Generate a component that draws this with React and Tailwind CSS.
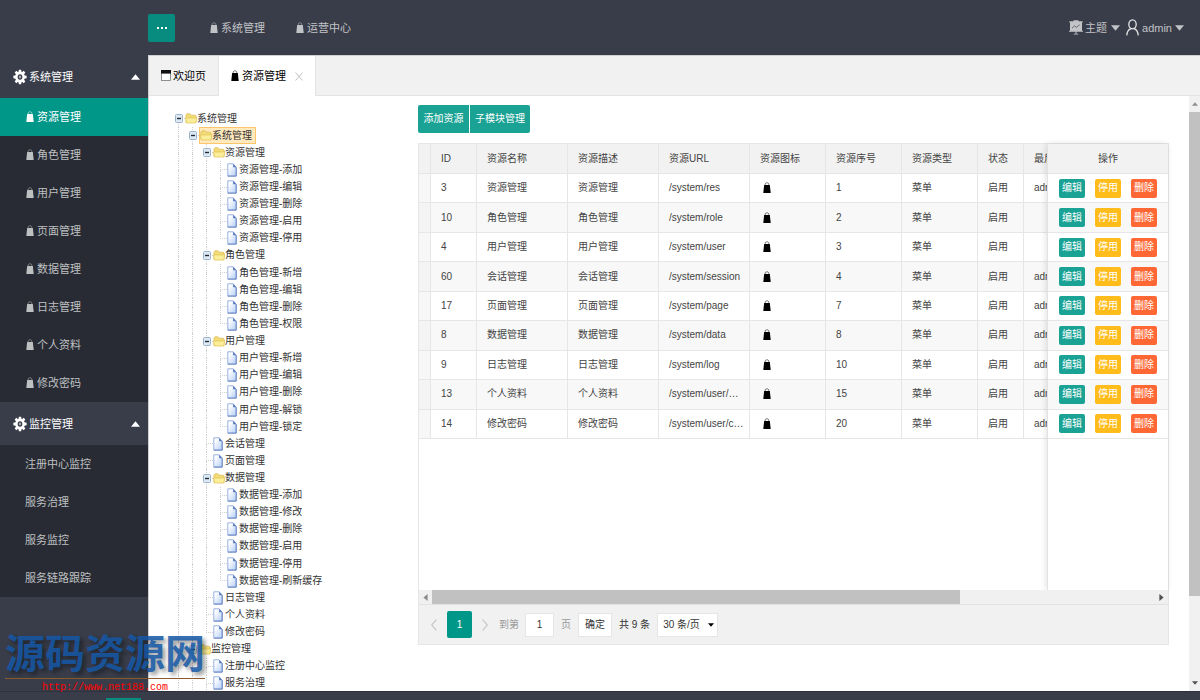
import React from "react";

const BAG_MENU = ["资源管理", "角色管理", "用户管理", "页面管理", "数据管理", "日志管理", "个人资料", "修改密码"];
const MONITOR_MENU = ["注册中心监控", "服务治理", "服务监控", "服务链路跟踪"];

const TREE = {
  name: "系统管理",
  children: [
    {
      name: "系统管理",
      selected: true,
      children: [
        { name: "资源管理", children: ["添加", "编辑", "删除", "启用", "停用"].map((s) => ({ name: "资源管理-" + s })) },
        { name: "角色管理", children: ["新增", "编辑", "删除", "权限"].map((s) => ({ name: "角色管理-" + s })) },
        { name: "用户管理", children: ["新增", "编辑", "删除", "解锁", "锁定"].map((s) => ({ name: "用户管理-" + s })) },
        { name: "会话管理" },
        { name: "页面管理" },
        { name: "数据管理", children: ["添加", "修改", "删除", "启用", "停用", "刷新缓存"].map((s) => ({ name: "数据管理-" + s })) },
        { name: "日志管理" },
        { name: "个人资料" },
        { name: "修改密码" },
      ],
    },
    { name: "监控管理", more: true, children: [{ name: "注册中心监控" }, { name: "服务治理", more: true }] },
  ],
};

// Each row carries the guide-line flags of its ancestors and of its own branch.
function flatten(node, guides, last, out) {
  const down = guides.length === 0 || !last || !!node.more;
  out.push({ node, guides, down });
  (node.children || []).forEach((child, i, all) => flatten(child, [...guides, down], i === all.length - 1, out));
  return out;
}
const TREE_ROWS = flatten(TREE, [], true, []);

const ROWS = [
  ["3", "资源管理", "/system/res", "1", "admin"],
  ["10", "角色管理", "/system/role", "2", ""],
  ["4", "用户管理", "/system/user", "3", ""],
  ["60", "会话管理", "/system/session", "4", "admin"],
  ["17", "页面管理", "/system/page", "7", "admin"],
  ["8", "数据管理", "/system/data", "8", "admin"],
  ["9", "日志管理", "/system/log", "10", "admin"],
  ["13", "个人资料", "/system/user/message", "15", "admin"],
  ["14", "修改密码", "/system/user/changepwd", "20", "admin"],
];

function Bag({ className }) {
  return (
    <svg viewBox="0 0 8 12" className={"h-3 w-2 shrink-0 " + className} aria-hidden="true">
      <path d="M2.2 3.6V2.3C2.2 1.3 3 .8 4 .8s1.8.5 1.8 1.5v1.3" fill="none" stroke="currentColor" strokeOpacity="0.7" strokeWidth="0.8" />
      <path d="M1.2 2.9h5.6l.9 7.5c0 .4-.2.7-.6.7H.9c-.4 0-.6-.3-.6-.7z" fill="currentColor" />
    </svg>
  );
}

function Gear() {
  return (
    <svg viewBox="0 0 16 18" className="h-4 w-[14px] shrink-0" aria-hidden="true">
      <g fill="currentColor">
        <ellipse cx="8" cy="9" rx="5.5" ry="6.2" />
        <path d="M6.7 0.6h2.6l.5 3H6.2zM6.7 17.4h2.6l.5-3H6.2zM0.4 7.6v2.8l3 .6V7zM15.6 7.6v2.8l-3 .6V7zM1.9 3.8 3.8 1.9l2.3 1.9-2.4 2.6zM14.1 3.8l-1.9-1.9-2.3 1.9 2.4 2.6zM1.9 14.2l1.9 1.9 2.3-1.9-2.4-2.6zM14.1 14.2l-1.9 1.9-2.3-1.9 2.4-2.6z" />
      </g>
      <ellipse cx="8" cy="9" rx="2.7" ry="3.1" fill="#393d49" />
      <ellipse cx="8" cy="9" rx="1.4" ry="1.6" fill="#a5a7ad" />
    </svg>
  );
}

function Triangle({ d, className }) {
  return (
    <svg viewBox="0 0 10 6" className={"shrink-0 " + className} aria-hidden="true">
      <path d={d} fill="currentColor" />
    </svg>
  );
}
const UP = "M0 6 5 0l5 6z";
const DOWN = "M0 0h10L5 6z";

function Chevron({ d }) {
  return (
    <svg viewBox="0 0 6 12" className="h-3 w-[6px]" aria-hidden="true">
      <path d={d} fill="none" stroke="#c2c2c2" strokeWidth="1.1" />
    </svg>
  );
}

function FolderIcon() {
  return (
    <svg viewBox="0 0 12 13" className="h-[13px] w-3 shrink-0" aria-hidden="true">
      <path d="M1 10.5V2.8l1-1h3l1 1.4h4.2l.8.8v6.6z" fill="#f3dc77" stroke="#d9b94a" strokeWidth="0.7" />
      <path d="M.5 6h9.2l1.9-.9L10.9 11H1.4z" fill="#fbee9b" stroke="#dfc253" strokeWidth="0.7" />
    </svg>
  );
}

function PageIcon() {
  return (
    <svg viewBox="0 0 12 14" className="h-[14px] w-3 shrink-0" aria-hidden="true">
      <defs>
        <linearGradient id="sheet" x1="0" y1="0" x2="1" y2="1">
          <stop offset="0.2" stopColor="#ffffff" />
          <stop offset="1" stopColor="#b3cdf7" />
        </linearGradient>
      </defs>
      <path d="M.8.8h5.4l3 3.4v8.9H.8z" fill="url(#sheet)" stroke="#8fa9dc" strokeWidth="0.9" />
      <path d="M6.2.8v3.4h3z" fill="#4f74b8" />
      <path d="M9.2 4.2v8.9H.8" fill="none" stroke="#6482bf" strokeWidth="0.9" />
    </svg>
  );
}

function Guide({ up, down, across, toggle }) {
  return (
    <span className="relative flex w-[14px] shrink-0 justify-end">
      <span className="flex w-[7px] flex-col">
        <span className={"flex-1 border-dotted border-[#d0d0d0] " + (up ? "border-l " : "") + (across ? "border-b" : "")} />
        <span className={"flex-1 border-dotted border-[#d0d0d0] " + (down ? "border-l" : "")} />
      </span>
      {toggle && (
        <button type="button" aria-label="折叠" className="absolute inset-0 flex items-center justify-center pl-px">
          <svg viewBox="0 0 8 9" className="h-[9px] w-2" aria-hidden="true">
            <rect x="0.5" y="0.5" width="7" height="8" rx="1" fill="#dfe9f3" stroke="#9bb3ca" />
            <path d="M2 4.5h4" stroke="#1f2c3a" strokeWidth="1.4" />
          </svg>
        </button>
      )}
    </span>
  );
}

function Tree() {
  return (
    <ul className="grid h-[582px] w-[247px] shrink-0 auto-rows-fr pl-[22px] text-[10px] leading-none text-[#333]" aria-label="资源树">
      {TREE_ROWS.map(({ node, guides, down }, i) => (
        <li key={i} className="flex">
          {guides.map((on, g) => g < guides.length && <Guide key={g} up={on} down={on} />)}
          <Guide up={guides.length > 0} down={down} across toggle={!!node.children} />
          <a
            href="#node"
            className={
              "flex items-center whitespace-nowrap " +
              (node.selected ? "border border-[#ffc56b] bg-[#ffe9bd] pr-[3px]" : "")
            }
          >
            {node.children ? <FolderIcon /> : <PageIcon />}
            <span>{node.name}</span>
          </a>
        </li>
      ))}
    </ul>
  );
}

function SideGroup({ title, items, bags, active }) {
  return (
    <section>
      <button type="button" className="flex h-[43px] w-full items-center gap-[2px] pr-2 pl-[13px] text-white">
        <Gear />
        <span className="flex-1 text-left">{title}</span>
        <Triangle d={UP} className="h-[6px] w-[9px]" />
      </button>
      <ul className="bg-[#282b33]">
        {items.map((name) => (
          <li key={name}>
            <a
              href="#menu"
              className={
                "flex h-[38px] items-center gap-[3px] pl-[25px] " +
                (name === active ? "bg-[#009688] text-white" : "text-[#bfc0c2]")
              }
            >
              {bags && <Bag className="ml-px" />}
              {name}
            </a>
          </li>
        ))}
      </ul>
    </section>
  );
}

const TH = "truncate border-r border-b border-[#e6e6e6] py-0 pr-[5px] pl-[10px] text-left font-normal";

function ResourceTable() {
  return (
    <div className="flex min-h-0 flex-1">
      <div className="min-w-0 flex-1 overflow-hidden">
        <table className="h-[295px] w-[700px] table-fixed border-separate border-spacing-0">
          <colgroup>
            <col className="w-3" />
            <col className="w-[46px]" />
            <col className="w-[91px]" />
            <col className="w-[91px]" />
            <col className="w-[91px]" />
            <col className="w-[76px]" />
            <col className="w-[76px]" />
            <col className="w-[76px]" />
            <col className="w-[46px]" />
            <col />
          </colgroup>
          <thead className="bg-[#f2f2f2]">
            <tr className="h-[30px]">
              <th className="border-r border-b border-[#e6e6e6]" />
              {["ID", "资源名称", "资源描述", "资源URL", "资源图标", "资源序号", "资源类型", "状态", "最后修改人"].map((h) => (
                <th key={h} scope="col" className={TH}>{h}</th>
              ))}
            </tr>
          </thead>
          <tbody>
            {ROWS.map(([id, name, url, order, user]) => (
              <tr key={id} className="h-[29px] even:bg-[#f8f8f8]">
                <td className="border-r border-b border-[#e6e6e6] bg-[#f2f2f2]/60" />
                <td className={TH}>{id}</td>
                <td className={TH}>{name}</td>
                <td className={TH}>{name}</td>
                <td className={TH}>{url}</td>
                <td className={TH}><Bag className="ml-[3px] text-black" /></td>
                <td className={TH}>{order}</td>
                <td className={TH}>菜单</td>
                <td className={TH}>启用</td>
                <td className={TH}>{user}</td>
              </tr>
            ))}
          </tbody>
        </table>
      </div>
      <div className="w-[121px] shrink-0 border-l border-[#e2e2e2] bg-white shadow-[-1px_0_6px_rgba(0,0,0,0.12)]">
        <table className="h-[295px] w-full border-separate border-spacing-0">
          <thead className="bg-[#f2f2f2]">
            <tr className="h-[30px]">
              <th scope="col" className="border-b border-[#e6e6e6] py-0 font-normal">操作</th>
            </tr>
          </thead>
          <tbody>
            {ROWS.map(([id]) => (
              <tr key={id} className="h-[29px] even:bg-[#f8f8f8]">
                <td className="border-b border-[#e6e6e6] py-0">
                  <div className="flex justify-center gap-[10px] text-white">
                    <button type="button" className="h-[19px] w-[26px] rounded-xs bg-[#1aa294]">编辑</button>
                    <button type="button" className="h-[19px] w-[26px] rounded-xs bg-[#ffbc1a]">停用</button>
                    <button type="button" className="h-[19px] w-[26px] rounded-xs bg-[#ff6835]">删除</button>
                  </div>
                </td>
              </tr>
            ))}
          </tbody>
        </table>
      </div>
    </div>
  );
}

function Pager() {
  return (
    <div className="flex h-[40px] shrink-0 items-center border-t border-[#e2e2e2] bg-[#f1f1f1] pl-3 text-[#333]">
      <button type="button" aria-label="上一页"><Chevron d="M5.4.6.7 6l4.7 5.4" /></button>
      <button type="button" className="mr-[10px] ml-[10px] h-[27px] w-[25px] rounded-xs bg-[#009688] text-white">1</button>
      <button type="button" aria-label="下一页"><Chevron d="M.6.6 5.3 6 .6 11.4" /></button>
      <label htmlFor="page-no" className="mr-[6px] ml-[11px] text-[#999]">到第</label>
      <input id="page-no" defaultValue="1" className="h-6 w-[29px] border border-[#e6e6e6] bg-white text-center" />
      <span className="mx-[7px] text-[#999]">页</span>
      <button type="button" className="h-6 w-[34px] border border-[#e6e6e6] bg-white">确定</button>
      <span className="mx-[7px]">共 9 条</span>
      <span className="relative flex items-center">
        <select aria-label="每页条数" className="h-6 w-[61px] appearance-none border border-[#e6e6e6] bg-white pl-[5px]">
          <option>30 条/页</option>
        </select>
        <Triangle d={DOWN} className="pointer-events-none absolute right-1 h-[6px] w-[6px] text-black" />
      </span>
    </div>
  );
}

export default function App() {
  return (
    <div className="relative flex h-screen flex-col overflow-hidden bg-[#393d49] font-['Liberation_Sans','Noto_Sans_CJK_SC',sans-serif] text-[11px] leading-4">
      <header className="flex h-[55px] shrink-0 items-center pr-4 pl-[148px] text-[#c2c3c7]">
        <button type="button" aria-label="菜单" className="flex h-[28px] w-[27px] items-center justify-center gap-[2px] rounded-xs bg-[#088c80]">
          <span className="size-[2px] bg-white" />
          <span className="size-[2px] bg-white" />
          <span className="size-[2px] bg-white" />
        </button>
        <nav className="ml-[35px] flex gap-[31px]">
          {["系统管理", "运营中心"].map((name) => (
            <a key={name} href="#nav" className="flex items-center gap-[3px]"><Bag className="" />{name}</a>
          ))}
        </nav>
        <div className="ml-auto flex items-center">
          <button type="button" className="flex items-center gap-[2px]">
            <svg viewBox="0 0 14 15" className="h-[15px] w-[14px]" aria-hidden="true">
              <path d="M4.5 1.2V.2h5v1zM.3 1.2h13.4v1.3H.3zM1 2.5h12v8.7H1zM0 10.7h14v1H0zM6.5 11.5h1v2.2h-1zM4.7 13.8h4.6v.8H4.7z" fill="#c2c3c7" />
              <path d="m3 8.2 2.5-2.4 1.8 1.6L10.6 4.8" fill="none" stroke="#5b5e68" strokeWidth="0.9" />
            </svg>
            主题
            <Triangle d={DOWN} className="ml-[2px] h-[6px] w-[9px]" />
          </button>
          <button type="button" className="ml-[6px] flex items-center gap-[3px]">
            <svg viewBox="0 0 13 17" className="h-[17px] w-[13px]" fill="none" stroke="#e4e4e6" strokeWidth="1.3" aria-hidden="true">
              <ellipse cx="6.5" cy="5.3" rx="3.7" ry="4.5" />
              <path d="M.8 16.4c.2-3.6 1.6-5.8 4-6.8M12.2 16.4c-.2-3.6-1.6-5.8-4-6.8" />
            </svg>
            admin
            <Triangle d={DOWN} className="h-[6px] w-[9px]" />
          </button>
        </div>
      </header>

      <div className="flex min-h-0 flex-1">
        <aside className="w-[148px] shrink-0 overflow-hidden">
          <SideGroup title="系统管理" items={BAG_MENU} bags active="资源管理" />
          <SideGroup title="监控管理" items={MONITOR_MENU} />
        </aside>

        <main className="flex min-w-0 flex-1 flex-col border-t border-l border-[#d0d0d3] bg-white">
          <div className="flex h-[40px] shrink-0 bg-[#f1f1f1] text-black">
            <a href="#welcome" className="flex w-[70px] items-center justify-center gap-[2px] border-r border-b border-[#e4e4e4]">
              <svg viewBox="0 0 10 11" className="h-[11px] w-[10px]" aria-hidden="true">
                <rect x="0.5" y="0.5" width="9" height="10" fill="#fff" stroke="#777" strokeWidth="0.8" />
                <rect width="10" height="3.6" fill="#111" />
              </svg>
              欢迎页
            </a>
            <div className="flex w-[97px] items-center gap-[3px] border-r border-[#e4e4e4] bg-white pl-3">
              <Bag className="" />
              资源管理
              <button type="button" aria-label="关闭" className="ml-[6px]">
                <svg viewBox="0 0 8 9" className="h-[9px] w-2" aria-hidden="true">
                  <path d="M.5.5l7 8M7.5.5l-7 8" stroke="#c2c2c2" />
                </svg>
              </button>
            </div>
            <div className="flex-1 border-b border-[#e4e4e4]" />
          </div>

          <div className="flex min-h-0 flex-1">
            <div className="flex min-w-0 flex-1 items-start overflow-hidden pr-5 text-[10px]">
              <div className="pt-[14px]"><Tree /></div>
              <section className="ml-[22px] flex min-w-0 flex-1 flex-col pt-[9px]">
                <div className="flex gap-px text-white">
                  <button type="button" className="h-[28px] w-[51px] rounded-l-xs bg-[#1aa294]">添加资源</button>
                  <button type="button" className="h-[28px] w-[60px] rounded-r-xs bg-[#1aa294]">子模块管理</button>
                </div>
                <div className="mt-[10px] flex h-[502px] flex-col border border-[#e6e6e6] text-[#444]">
                  <ResourceTable />
                  <div className="flex h-[14px] shrink-0 items-center bg-[#f0f0f0]">
                    <span className="flex w-[13px] justify-center">
                      <Triangle d={UP} className="h-[5px] w-[7px] -rotate-90 text-[#8c8c8c]" />
                    </span>
                    <span className="flex flex-1"><span className="h-[14px] w-[73%] bg-[#c1c1c1]" /></span>
                    <span className="flex w-[13px] justify-center">
                      <Triangle d={UP} className="h-[5px] w-[7px] rotate-90 text-[#505050]" />
                    </span>
                  </div>
                  <Pager />
                </div>
              </section>
            </div>
            <div className="flex w-[11px] shrink-0 flex-col items-center bg-[#f1f1f1]">
              <span className="flex h-4 items-center"><Triangle d={UP} className="h-1 w-[6px] text-[#8c8c8c]" /></span>
              <span className="flex w-full flex-1 flex-col"><span className="h-[86%] bg-[#c1c1c1]" /></span>
              <span className="flex h-4 items-center"><Triangle d={DOWN} className="h-1 w-[6px] text-[#505050]" /></span>
            </div>
          </div>
        </main>
      </div>

      <footer className="flex h-[9px] shrink-0 items-end border-t border-[#2f323c] pl-[106px]">
        <span className="h-[2px] w-[35px] bg-[#088c80]" />
      </footer>

      <div className="pointer-events-none absolute bottom-1 left-[5px] w-[200px] text-center">
        <p className="border-b border-[#8a5a2b] text-[40px] leading-[48px] font-bold whitespace-nowrap text-[#1558a8]/85 [text-shadow:3px_3px_4px_rgba(0,0,0,0.4)]">
          源码资源网
        </p>
        <p className="pt-px font-['Liberation_Mono',monospace] text-[10px] text-[#ff0000]">http://www.net188.com</p>
      </div>
    </div>
  );
}
